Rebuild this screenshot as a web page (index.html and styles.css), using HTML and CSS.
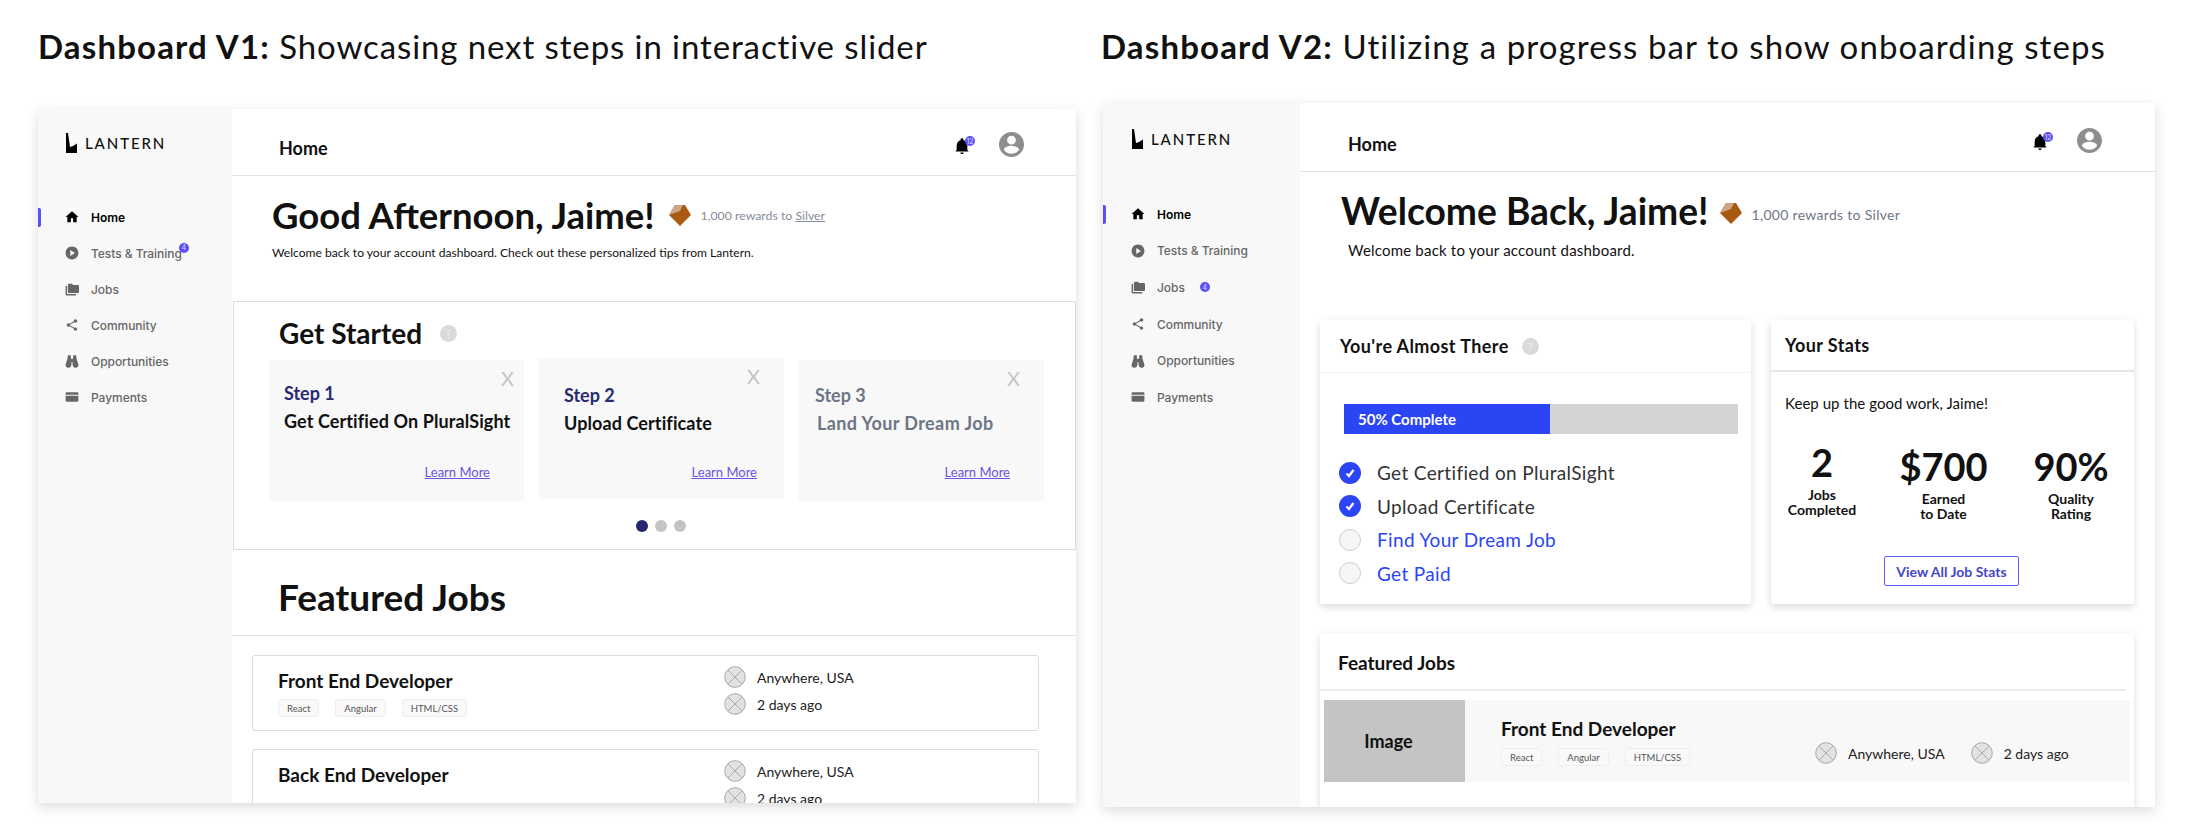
FILE: index.html
```html
<!DOCTYPE html>
<html lang="en">
  <head>
    <meta charset="UTF-8" />
    <title>Lantern dashboards</title>
    <link rel="stylesheet" href="styles.css">
  </head>
  <body>
    <svg class="sprite" width="0" height="0">
      <symbol id="i-home" viewBox="0 0 24 24"><path d="M10 21v-7h4v7h6v-9h3L12 2 1 12h3v9z"/></symbol>
      <symbol id="i-play" viewBox="0 0 24 24"><path d="M12 1C5.900 1 1 5.900 1 12s4.900 11 11 11 11-4.900 11-11S18.100 1 12 1zm-3 16V7l8 5-8 5z"/></symbol>
      <symbol id="i-jobs" viewBox="0 0 24 24"><path d="M3 7H1v14c0 1.100.9 2 2 2h16v-2.500H3.500V7z"/><path d="M22 5h-8l-2-2H7c-1.100 0-2 .9-2 2v12c0 1.100.9 2 2 2h15c1.100 0 2-.9 2-2V7c0-1.100-.9-2-2-2z"/></symbol>
      <symbol id="i-share" viewBox="0 0 24 24"><path d="M18 16.080c-.76 0-1.440.3-1.960.77L8.910 12.700c.05-.23.09-.46.09-.7s-.04-.47-.09-.7l7.050-4.110c.54.5 1.250.81 2.040.81 1.660 0 3-1.340 3-3s-1.340-3-3-3-3 1.340-3 3c0 .24.04.47.09.7L8.040 9.810C7.500 9.310 6.790 9 6 9c-1.660 0-3 1.340-3 3s1.340 3 3 3c.79 0 1.500-.31 2.040-.81l7.120 4.160c-.05.21-.08.43-.08.65 0 1.610 1.310 2.920 2.920 2.920s2.920-1.310 2.920-2.920-1.310-2.920-2.920-2.920z"/></symbol>
      <symbol id="i-binoculars" viewBox="0 0 24 24"><path d="M5 2h5v6h4V2h5l1 7 3 9a5 5 0 0 1-10 1v-5h-2v5A5 5 0 0 1 1 18l3-9z"/></symbol>
      <symbol id="i-card" viewBox="0 0 24 24"><path d="M3 4h18c1.100 0 2 .9 2 2v2H1V6c0-1.100.9-2 2-2z"/><path d="M1 10h22v8c0 1.100-.9 2-2 2H3c-1.100 0-2-.9-2-2z"/></symbol>
      <symbol id="i-bell" viewBox="2 0 20 24"><path d="M12 24c1.300 0 2.400-1 2.400-2.400H9.600C9.600 23 10.700 24 12 24zm8-6v-6.500c0-4-2.200-7.300-5.800-8.200V2.500C14.200 1.200 13.200.2 12 .2S9.800 1.200 9.800 2.500v.8C6.200 4.200 4 7.500 4 11.500V18l-2 2.400h20z"/></symbol>
      <symbol id="i-user" viewBox="0 0 24 24"><path d="M12 0C5.400 0 0 5.400 0 12s5.400 12 12 12 12-5.400 12-12S18.600 0 12 0zm0 3.600c2.300 0 4.200 1.900 4.200 4.200S14.300 12 12 12 7.800 10.100 7.800 7.800 9.700 3.600 12 3.600zm0 17.300c-3 0-5.700-1.500-7.300-3.900.04-2.400 4.900-3.700 7.300-3.700s7.260 1.300 7.300 3.700c-1.600 2.400-4.300 3.900-7.300 3.900z"/></symbol>
      <symbol id="i-gem" viewBox="0 0 22 21"><path fill="#a85a10" d="M0 10 6 0h10l6 10-11 11z"/><path fill="#cba585" d="M0 10 6 0h8l-3 6z"/></symbol>
      <symbol id="i-photo" viewBox="0 0 22 22"><circle cx="11" cy="11" r="10.300" fill="#e2e2e2" stroke="#a9a9a9"/><path d="M4 4l14 14M18 4 4 18" stroke="#a9a9a9" fill="none"/></symbol>
      <symbol id="i-logo" viewBox="0 0 11 20"><path d="M0 0h2l2 14 3-1 4-2.500V20H0z"/></symbol>
    </svg>

    <div class="boards">
      <section class="board board-v1">
        <h1 class="board-title"><strong>Dashboard V1:</strong> Showcasing next steps in interactive slider</h1>
        <div class="panel">
          <aside class="sidebar">
            <div class="logo"><svg class="logo-mark"><use href="#i-logo"/></svg>LANTERN</div>
            <nav class="nav">
              <a class="nav-item active"><svg class="nav-icon"><use href="#i-home"/></svg>Home</a>
              <a class="nav-item"><svg class="nav-icon"><use href="#i-play"/></svg><span class="has-badge">Tests &amp; Training<span class="badge badge-corner">4</span></span></a>
              <a class="nav-item"><svg class="nav-icon"><use href="#i-jobs"/></svg>Jobs</a>
              <a class="nav-item"><svg class="nav-icon"><use href="#i-share"/></svg>Community</a>
              <a class="nav-item"><svg class="nav-icon"><use href="#i-binoculars"/></svg>Opportunities</a>
              <a class="nav-item"><svg class="nav-icon"><use href="#i-card"/></svg>Payments</a>
            </nav>
          </aside>
          <main class="content">
            <header class="topbar">
              <span class="topbar-title">Home</span>
              <span class="bell"><svg class="bell-icon"><use href="#i-bell"/></svg><span class="badge badge-bell">12</span></span>
              <svg class="avatar"><use href="#i-user"/></svg>
            </header>
            <div class="hero">
              <div class="hero-row">
                <h2 class="greeting">Good Afternoon, Jaime!</h2>
                <svg class="gem"><use href="#i-gem"/></svg>
                <span class="rewards">1,000 rewards to <u>Silver</u></span>
              </div>
              <p class="hero-sub">Welcome back to your account dashboard. Check out these personalized tips from Lantern.</p>
            </div>
            <div class="started">
              <div class="started-head">
                <h3>Get Started</h3>
                <span class="help">?</span>
              </div>
              <div class="steps">
                <div class="step step-one">
                  <span class="step-close">X</span>
                  <div class="step-num">Step 1</div>
                  <div class="step-name">Get Certified On PluralSight</div>
                  <a class="step-link">Learn More</a>
                </div>
                <div class="step step-two">
                  <span class="step-close">X</span>
                  <div class="step-num">Step 2</div>
                  <div class="step-name">Upload Certificate</div>
                  <a class="step-link">Learn More</a>
                </div>
                <div class="step step-three">
                  <span class="step-close">X</span>
                  <div class="step-num">Step 3</div>
                  <div class="step-name">Land Your Dream Job</div>
                  <a class="step-link">Learn More</a>
                </div>
              </div>
              <div class="dots"><i class="dot on"></i><i class="dot"></i><i class="dot"></i></div>
            </div>
            <h2 class="featured-big">Featured Jobs</h2>
            <div class="job-list">
              <div class="job-card">
                <div>
                  <div class="job-title">Front End Developer</div>
                  <div class="tags"><span class="tag">React</span><span class="tag">Angular</span><span class="tag">HTML/CSS</span></div>
                </div>
                <div class="job-meta">
                  <div class="meta-row"><svg class="photo"><use href="#i-photo"/></svg>Anywhere, USA</div>
                  <div class="meta-row"><svg class="photo"><use href="#i-photo"/></svg>2 days ago</div>
                </div>
              </div>
              <div class="job-card">
                <div>
                  <div class="job-title">Back End Developer</div>
                </div>
                <div class="job-meta">
                  <div class="meta-row"><svg class="photo"><use href="#i-photo"/></svg>Anywhere, USA</div>
                  <div class="meta-row"><svg class="photo"><use href="#i-photo"/></svg>2 days ago</div>
                </div>
              </div>
            </div>
          </main>
        </div>
      </section>

      <section class="board board-v2">
        <h1 class="board-title"><strong>Dashboard V2:</strong> Utilizing a progress bar to show onboarding steps</h1>
        <div class="panel">
          <aside class="sidebar">
            <div class="logo"><svg class="logo-mark"><use href="#i-logo"/></svg>LANTERN</div>
            <nav class="nav">
              <a class="nav-item active"><svg class="nav-icon"><use href="#i-home"/></svg>Home</a>
              <a class="nav-item"><svg class="nav-icon"><use href="#i-play"/></svg>Tests &amp; Training</a>
              <a class="nav-item"><svg class="nav-icon"><use href="#i-jobs"/></svg>Jobs<span class="badge badge-inline">4</span></a>
              <a class="nav-item"><svg class="nav-icon"><use href="#i-share"/></svg>Community</a>
              <a class="nav-item"><svg class="nav-icon"><use href="#i-binoculars"/></svg>Opportunities</a>
              <a class="nav-item"><svg class="nav-icon"><use href="#i-card"/></svg>Payments</a>
            </nav>
          </aside>
          <main class="content">
            <header class="topbar">
              <span class="topbar-title">Home</span>
              <span class="bell"><svg class="bell-icon"><use href="#i-bell"/></svg><span class="badge badge-bell">12</span></span>
              <svg class="avatar"><use href="#i-user"/></svg>
            </header>
            <div class="hero">
              <div class="hero-row">
                <h2 class="greeting">Welcome Back, Jaime!</h2>
                <svg class="gem"><use href="#i-gem"/></svg>
                <span class="rewards">1,000 rewards to Silver</span>
              </div>
              <p class="hero-sub">Welcome back to your account dashboard.</p>
            </div>
            <div class="cards">
              <div class="card almost">
                <div class="card-head"><h3>You're Almost There</h3><span class="help">?</span></div>
                <div class="progress"><div class="progress-fill" style="width: 52.3%">50% Complete</div></div>
                <ul class="checklist">
                  <li><span class="check done"><svg viewBox="0 0 12 12"><path d="M2.500 6.500 5 9l4.500-6"/></svg></span>Get Certified on PluralSight</li>
                  <li><span class="check done"><svg viewBox="0 0 12 12"><path d="M2.500 6.500 5 9l4.500-6"/></svg></span>Upload Certificate</li>
                  <li class="todo"><span class="check"></span>Find Your Dream Job</li>
                  <li class="todo"><span class="check"></span>Get Paid</li>
                </ul>
              </div>
              <div class="card stats">
                <div class="card-head"><h3>Your Stats</h3></div>
                <p class="stats-note">Keep up the good work, Jaime!</p>
                <div class="stat-grid">
                  <div class="stat stat-first"><b>2</b><span>Jobs<br>Completed</span></div>
                  <div class="stat"><b>$700</b><span>Earned<br>to Date</span></div>
                  <div class="stat"><b>90%</b><span>Quality<br>Rating</span></div>
                </div>
                <a class="stats-btn">View All Job Stats</a>
              </div>
            </div>
            <div class="card featured">
              <h3 class="featured-head">Featured Jobs</h3>
              <div class="job-row">
                <div class="job-image">Image</div>
                <div class="job-info">
                  <div class="job-title">Front End Developer</div>
                  <div class="tags"><span class="tag">React</span><span class="tag">Angular</span><span class="tag">HTML/CSS</span></div>
                </div>
                <div class="job-meta-row">
                  <div class="meta-row"><svg class="photo"><use href="#i-photo"/></svg>Anywhere, USA</div>
                  <div class="meta-row"><svg class="photo"><use href="#i-photo"/></svg>2 days ago</div>
                </div>
              </div>
            </div>
          </main>
        </div>
      </section>
    </div>
  </body>
</html>
```

FILE: styles.css
```css
* {
  box-sizing: border-box;
}
html, body {
  height: 836px;
  overflow: hidden;
}
body {
  margin: 0;
  background: #ffffff;
  color: #111;
  font-family: "Lato", Arial, sans-serif;
}
h1, h2, h3, p, ul {
  margin: 0;
  padding: 0;
}
.sprite {
  position: absolute;
}
.boards {
  display: flex;
  padding-left: 38px;
  gap: 25px;
}
.board-v1 {
  width: 1038px;
}
.board-v2 {
  width: 1054px;
}
.board-title {
  height: 92px;
  line-height: 92px;
  font-size: 33px;
  font-weight: 400;
  letter-spacing: 1.1px;
  white-space: nowrap;
}
.board-title strong {
  font-weight: 700;
  letter-spacing: 1.15px;
}
.board-v1 .board-title {
  margin-bottom: 17px;
  letter-spacing: 0.9px;
}
.board-v2 .board-title {
  margin-bottom: 11px;
}
.panel {
  display: flex;
  overflow: hidden;
  background: #fff;
  box-shadow: 0 4px 12px rgba(0, 0, 0, 0.14);
}
.board-v1 .panel {
  height: 694px;
}
.board-v2 .panel {
  height: 704px;
  margin-left: 2px;
}

/* sidebar */
.sidebar {
  flex: none;
  background: #f8f8f8;
}
.board-v1 .sidebar {
  width: 194px;
}
.board-v2 .sidebar {
  width: 197px;
}
.logo {
  display: flex;
  align-items: center;
  padding-left: 28px;
  font-size: 15px;
  font-weight: 500;
  letter-spacing: 1.9px;
}
.board-v1 .logo {
  padding-top: 24px;
}
.board-v2 .logo {
  padding-top: 26px;
  padding-left: 29px;
}
.logo-mark {
  width: 11px;
  height: 20px;
  margin-right: 8px;
}
.board-v1 .nav {
  margin-top: 46px;
}
.board-v2 .nav {
  margin-top: 47px;
}
.nav-item {
  display: flex;
  align-items: center;
  padding-left: 27px;
  font-family: "Inter", Arial, sans-serif;
  font-size: 12px;
  font-weight: 500;
  letter-spacing: -0.05px;
  color: #666;
}
.board-v1 .nav-item {
  height: 36px;
}
.board-v2 .nav-item {
  height: 36.6px;
  padding-left: 28px;
}
.nav-item.active {
  position: relative;
  color: #000;
  font-weight: 600;
}
.nav-item.active::before {
  content: "";
  position: absolute;
  left: 0;
  top: 9px;
  width: 3px;
  height: 19px;
  border-radius: 0 2px 2px 0;
  background: #5b4ff5;
}
.nav-icon {
  flex: none;
  width: 14px;
  height: 14px;
  margin-right: 12px;
  fill: #666;
}
.active .nav-icon {
  fill: #000;
}
.has-badge {
  position: relative;
}
.badge {
  display: flex;
  align-items: center;
  justify-content: center;
  width: 10px;
  height: 10px;
  border-radius: 50%;
  background: #5b4ff5;
  color: #dcd9ff;
  font-family: "Inter", Arial, sans-serif;
  font-size: 7px;
  font-weight: 400;
}
.badge-corner {
  position: absolute;
  right: -7px;
  top: -3px;
}
.badge-inline {
  margin-left: 15px;
}
.badge-bell {
  position: absolute;
  right: -6px;
  top: -2px;
}

/* top bar */
.content {
  flex: 1;
  min-width: 0;
}
.topbar {
  display: flex;
  align-items: flex-start;
  border-bottom: 1px solid #e2e2e2;
}
.board-v1 .topbar {
  height: 67px;
  padding: 23px 52px 0 47px;
}
.board-v2 .topbar {
  height: 69px;
  padding: 25px 53px 0 48px;
}
.topbar-title {
  flex: 1;
  font-size: 18px;
  font-weight: 700;
  line-height: 32px;
}
.bell {
  position: relative;
  width: 14px;
  height: 16px;
  margin: 6px 30px 0 0;
}
.bell-icon {
  display: block;
  width: 14px;
  height: 16px;
}
.avatar {
  width: 25px;
  height: 25px;
  fill: #8e8e8e;
}

/* hero */
.hero-row {
  display: flex;
  align-items: center;
}
.board-v1 .hero {
  height: 125px;
  padding: 17px 0 0 40px;
}
.board-v2 .hero {
  height: 148px;
  padding: 17px 0 0 41px;
}
.greeting {
  font-size: 36.5px;
  line-height: 44px;
  font-weight: 700;
  white-space: nowrap;
}
.board-v2 .greeting {
  font-size: 37.2px;
}
.gem {
  width: 22px;
  height: 21px;
  margin: 0 10px 0 14px;
}
.board-v2 .gem {
  margin: 4px 10px 0 11px;
}
.rewards {
  font-size: 12.300px;
  color: #858b99;
}
.board-v2 .rewards {
  margin-top: 6px;
  font-size: 14px;
  letter-spacing: 0.3px;
  color: #6f7787;
}
.hero-sub {
  margin-top: 7px;
  font-size: 12.100px;
  line-height: 18px;
}
.board-v2 .hero-sub {
  margin: 8px 0 0 7px;
  font-size: 15px;
  letter-spacing: 0.2px;
}

/* get started slider */
.started {
  height: 249px;
  margin-left: 1px;
  border: 1px solid #dcdcdc;
}
.started-head {
  display: flex;
  align-items: center;
  height: 62px;
  padding-left: 45px;
}
.started-head h3 {
  font-size: 28px;
  font-weight: 700;
}
.help {
  display: flex;
  align-items: center;
  justify-content: center;
  width: 17px;
  height: 17px;
  margin-left: 18px;
  border-radius: 50%;
  background: #dadada;
  color: #f0f0f0;
  font-size: 11px;
}
.steps {
  display: flex;
  align-items: flex-start;
  margin-top: -4px;
  padding-left: 35px;
}
.step {
  position: relative;
  height: 141px;
  background: #f8f8f8;
}
.step-one {
  width: 255px;
  padding: 22px 0 0 15px;
}
.step-two {
  width: 246px;
  margin: -2px 14px 0;
  padding: 26px 0 0 26px;
}
.step-three {
  width: 246px;
  padding: 24px 0 0 17px;
  color: #6d7585;
}
.step-close {
  position: absolute;
  right: 10px;
  top: 6px;
  color: #c4c4c4;
  font-size: 20px;
}
.step-two .step-close,
.step-three .step-close {
  right: 24px;
}
.step-num {
  font-size: 18px;
  font-weight: 700;
  color: #2a2a72;
  line-height: 22px;
}
.step-three .step-num {
  color: #6d7585;
}
.step-name {
  margin-top: 6px;
  font-size: 18px;
  letter-spacing: 0.1px;
  font-weight: 700;
  line-height: 22px;
}
.step-three .step-name {
  padding-left: 2px;
  letter-spacing: 0.4px;
}
.step-link {
  position: absolute;
  right: 34px;
  top: 104px;
  font-size: 13px;
  color: #6a55e0;
  text-decoration: underline;
}
.step-two .step-link {
  right: 27px;
  top: 106px;
}
.dots {
  display: flex;
  justify-content: center;
  gap: 7px;
  margin-top: 19px;
  padding-left: 12px;
}
.dot {
  width: 12px;
  height: 12px;
  border-radius: 50%;
  background: #c4c4c4;
}
.dot.on {
  background: #25256f;
}

/* v1 jobs */
.featured-big {
  height: 86px;
  padding: 23px 0 0 46px;
  border-bottom: 1px solid #e2e2e2;
  font-size: 37px;
  line-height: 48px;
  font-weight: 700;
}
.job-list {
  padding: 19px 0 0 20px;
}
.job-card {
  display: grid;
  grid-template-columns: 446px 1fr;
  width: 787px;
  height: 76px;
  margin-bottom: 18px;
  padding: 10px 0 0 25px;
  border: 1px solid #dcdcdc;
  border-radius: 3px;
}
.job-title {
  padding-top: 2px;
  font-size: 19px;
  font-weight: 700;
  line-height: 26px;
}
.tags {
  display: flex;
  gap: 16px;
  margin-top: 5px;
}
.tag {
  display: flex;
  align-items: center;
  padding: 0 8px;
  height: 18px;
  border: 1px solid #eeeeee;
  border-radius: 3px;
  background: #f9f9f9;
  font-size: 9.500px;
  color: #555;
}
.job-meta {
  display: flex;
  flex-direction: column;
  gap: 5px;
}
.meta-row {
  display: flex;
  align-items: center;
  font-size: 14px;
  color: #222;
  white-space: nowrap;
}
.photo {
  flex: none;
  width: 22px;
  height: 22px;
  margin-right: 11px;
}

/* v2 cards */
.cards {
  display: grid;
  grid-template-columns: 431px 363px;
  gap: 20px;
  padding-left: 20px;
}
.card {
  background: #fff;
  box-shadow: 0 3px 8px rgba(0, 0, 0, 0.14);
}
.almost, .stats {
  height: 284px;
}
.card-head {
  display: flex;
  align-items: center;
  height: 53px;
  padding-left: 20px;
  border-bottom: 1px solid #f4f4f4;
}
.stats .card-head {
  height: 52px;
  padding-left: 14px;
  border-bottom: 2px solid #e6e6e6;
}
.card-head h3 {
  font-size: 18px;
  font-weight: 700;
  letter-spacing: 0.4px;
}
.card-head .help {
  margin-left: 13px;
}
.progress {
  height: 30px;
  margin: 31px 13px 0 24px;
  background: #d4d4d4;
}
.progress-fill {
  height: 100%;
  padding-left: 14px;
  background: #2b45f5;
  color: #fff;
  font-size: 15px;
  font-weight: 700;
  line-height: 30px;
}
.checklist {
  margin-top: 22px;
  padding-left: 19px;
  list-style: none;
}
.checklist li {
  display: flex;
  align-items: center;
  height: 33.500px;
  font-size: 19px;
  letter-spacing: 0.35px;
  color: #333;
}
.checklist li.todo {
  color: #2b45f5;
}
.check {
  flex: none;
  width: 22px;
  height: 22px;
  margin-right: 16px;
  border: 1px solid #cfcfcf;
  border-radius: 50%;
  background: #f6f6f6;
}
.check.done {
  display: flex;
  align-items: center;
  justify-content: center;
  border: none;
  background: #2b45f5;
}
.check svg {
  width: 12px;
  height: 12px;
  fill: none;
  stroke: #fff;
  stroke-width: 2.200;
}
.stats-note {
  margin: 21px 0 0 14px;
  font-size: 15px;
  letter-spacing: 0.05px;
  line-height: 20px;
}
.stat-grid {
  display: grid;
  grid-template-columns: 102px 141px 114px;
  margin-top: 31px;
}
.stat {
  display: flex;
  flex-direction: column;
  align-items: center;
  text-align: center;
}
.stat-first {
  margin-top: -4px;
}
.stat b {
  font-size: 38px;
  line-height: 44px;
  font-weight: 700;
}
.stat span {
  margin-top: 3px;
  font-size: 14px;
  font-weight: 700;
  line-height: 15px;
}
.stats-btn {
  display: flex;
  align-items: center;
  justify-content: center;
  width: 135px;
  height: 30px;
  margin: 35px 0 0 113px;
  border: 1px solid #5b5ff5;
  border-radius: 2px;
  color: #4646c8;
  font-size: 14px;
  font-weight: 700;
}
.featured {
  width: 814px;
  height: 200px;
  margin: 29px 0 0 20px;
}
.featured-head {
  height: 58px;
  padding: 17px 0 0 18px;
  margin-right: 8px;
  border-bottom: 2px solid #ececec;
  font-size: 19px;
  font-weight: 700;
  line-height: 26px;
}
.job-row {
  display: flex;
  width: 806px;
  height: 82px;
  margin: 9px 0 0 4px;
  background: #f8f8f8;
}
.job-image {
  flex: none;
  width: 141px;
  padding-right: 12px;
  background: #c4c4c4;
  text-align: center;
  font-size: 18px;
  font-weight: 700;
  line-height: 82px;
}
.job-info {
  flex: none;
  width: 350px;
  padding: 14px 0 0 36px;
}
.job-info .tags {
  margin-top: 6px;
}
.job-meta-row {
  display: flex;
  gap: 26px;
  padding-top: 42px;
}
.job-meta-row .meta-row {
  height: 22px;
}
```
